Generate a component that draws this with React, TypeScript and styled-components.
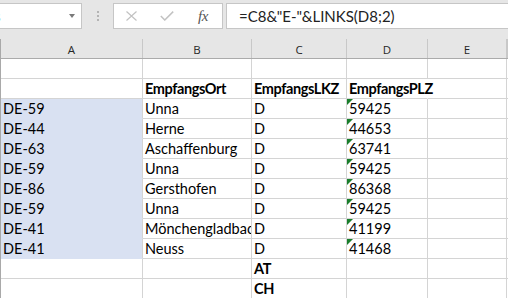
import React from 'react';
import styled, { createGlobalStyle, css } from 'styled-components';

const GlobalStyle = createGlobalStyle`
  html, body {
    margin: 0;
    padding: 0;
    background: #ffffff;
    overflow: hidden;
  }
  * {
    box-sizing: border-box;
  }
`;

const COLS = '142px 109px 95px 81px 79px 1fr';
const CELL_FONT = `Lato, 'Liberation Sans', sans-serif`;

const Sheet = styled.div`
  width: 508px;
  height: 298px;
  overflow: hidden;
  background: #ffffff;
`;

// formula bar
const TopBar = styled.div`
  height: 39px;
  background: #e6e6e6;
  display: flex;
  align-items: flex-start;
  padding-top: 3px;
`;

const NameBox = styled.div`
  margin-left: -40px;
  width: 122px;
  height: 26px;
  background: #ffffff;
  border: 1px solid #c6c6c6;
  display: flex;
  align-items: center;
  padding-left: 22px;
  font-family: ${CELL_FONT};
  font-size: 14px;
  color: #222;
  position: relative;
`;

const DropArrow = styled.span`
  position: absolute;
  right: 6px;
  top: 10px;
  width: 0;
  height: 0;
  border-left: 3px solid transparent;
  border-right: 3px solid transparent;
  border-top: 4px solid #7a7a7a;
`;

const Grip = styled.div`
  width: 31px;
  height: 26px;
  display: flex;
  flex-direction: column;
  align-items: center;
  justify-content: center;
  gap: 2px;

  span {
    width: 2px;
    height: 2px;
    background: #b4b4b4;
  }
`;

const ButtonBox = styled.div`
  width: 110px;
  height: 26px;
  background: #ffffff;
  border: 1px solid #c6c6c6;
  display: flex;
  align-items: center;
  padding-left: 12px;
`;

const BarButton = styled.span<{ $w: number }>`
  width: ${(p) => p.$w}px;
  display: flex;
  align-items: center;
  justify-content: flex-start;
`;

const Fx = styled.span`
  font-family: 'Liberation Serif', serif;
  font-style: italic;
  font-size: 15px;
  color: #555555;
  letter-spacing: -0.5px;
`;

const FormulaInput = styled.div`
  flex: 1;
  margin-left: 3px;
  margin-right: -10px;
  height: 26px;
  background: #ffffff;
  border: 1px solid #c6c6c6;
  display: flex;
  align-items: center;
  padding-left: 12px;
  font-family: ${CELL_FONT};
  font-size: 15px;
  color: #222222;
  white-space: nowrap;
`;

// grid
const Grid = styled.div`
  border-left: 1px solid #a9a9a9;
`;

const HeaderRow = styled.div`
  display: grid;
  grid-template-columns: ${COLS};
  height: 20px;
  background: #e6e6e6;
  border-bottom: 1px solid #ababab;
`;

const ColHead = styled.div`
  border-right: 1px solid #c8c8c8;
  display: flex;
  align-items: center;
  justify-content: center;
  font-family: 'Open Sans', 'Noto Sans', sans-serif;
  font-size: 11.5px;
  color: #262626;
  padding-top: 1px;
`;

const Row = styled.div`
  display: grid;
  grid-template-columns: ${COLS};
  height: 20px;
`;

const Cell = styled.div<{ $bold?: boolean; $selected?: boolean; $spill?: boolean; $flag?: boolean }>`
  position: relative;
  border-right: 1px solid #d4d4d4;
  border-bottom: 1px solid #d4d4d4;
  display: flex;
  align-items: flex-end;
  padding: 0 0 1px 2px;
  font-family: ${CELL_FONT};
  font-size: 14.5px;
  line-height: 17px;
  color: #000000;
  white-space: nowrap;
  overflow: hidden;
  font-weight: ${(p) => (p.$bold ? 700 : 400)};
  letter-spacing: ${(p) => (p.$bold ? '-0.4px' : '0')};

  ${(p) =>
    p.$selected &&
    css`
      background: #d9e1f2;
      border-bottom-color: #d9e1f2;
    `}

  ${(p) =>
    p.$spill &&
    css`
      overflow: visible;
      border-right-color: #ffffff;
      z-index: 1;
    `}

  ${(p) =>
    p.$flag &&
    css`
      &::before {
        content: '';
        position: absolute;
        left: 0;
        top: 0;
        width: 0;
        height: 0;
        border-top: 6px solid #1a7f2c;
        border-right: 6px solid transparent;
      }
    `}
`;

interface Entry {
  a: string;
  b: string;
  c: string;
  d: string;
}

const entries: Entry[] = [
  { a: 'DE-59', b: 'Unna', c: 'D', d: '59425' },
  { a: 'DE-44', b: 'Herne', c: 'D', d: '44653' },
  { a: 'DE-63', b: 'Aschaffenburg', c: 'D', d: '63741' },
  { a: 'DE-59', b: 'Unna', c: 'D', d: '59425' },
  { a: 'DE-86', b: 'Gersthofen', c: 'D', d: '86368' },
  { a: 'DE-59', b: 'Unna', c: 'D', d: '59425' },
  { a: 'DE-41', b: 'Mönchengladbach', c: 'D', d: '41199' },
  { a: 'DE-41', b: 'Neuss', c: 'D', d: '41468' },
];

const columns = ['A', 'B', 'C', 'D', 'E', ''];

const App: React.FC = () => {
  return (
    <Sheet>
      <GlobalStyle />
      <TopBar>
        <NameBox>
          A8
          <DropArrow />
        </NameBox>
        <Grip>
          <span />
          <span />
          <span />
        </Grip>
        <ButtonBox>
          <BarButton $w={34}>
            <svg width="11" height="10" viewBox="0 0 11 10">
              <path d="M0.5 0.5 L10.5 9.5 M10.5 0.5 L0.5 9.5" stroke="#c2c2c2" strokeWidth="1.2" fill="none" />
            </svg>
          </BarButton>
          <BarButton $w={38}>
            <svg width="14" height="10" viewBox="0 0 14 10">
              <path d="M0.8 5 L4.8 9 L13.2 0.6" stroke="#c2c2c2" strokeWidth="1.5" fill="none" />
            </svg>
          </BarButton>
          <BarButton $w={20}>
            <Fx>fx</Fx>
          </BarButton>
        </ButtonBox>
        <FormulaInput>=C8&amp;"E-"&amp;LINKS(D8;2)</FormulaInput>
      </TopBar>

      <Grid>
        <HeaderRow>
          {columns.map((c, i) => (
            <ColHead key={i}>{c}</ColHead>
          ))}
        </HeaderRow>

        <Row>
          {columns.map((_, i) => (
            <Cell key={i} />
          ))}
        </Row>

        <Row>
          <Cell />
          <Cell $bold>EmpfangsOrt</Cell>
          <Cell $bold>EmpfangsLKZ</Cell>
          <Cell $bold $spill>EmpfangsPLZ</Cell>
          <Cell />
          <Cell />
        </Row>

        {entries.map((e, i) => (
          <Row key={i}>
            <Cell $selected>{e.a}</Cell>
            <Cell>{e.b}</Cell>
            <Cell>{e.c}</Cell>
            <Cell $flag>{e.d}</Cell>
            <Cell />
            <Cell />
          </Row>
        ))}

        {['AT', 'CH'].map((code) => (
          <Row key={code}>
            <Cell />
            <Cell />
            <Cell $bold>{code}</Cell>
            <Cell />
            <Cell />
            <Cell />
          </Row>
        ))}
      </Grid>
    </Sheet>
  );
};

export default App;
